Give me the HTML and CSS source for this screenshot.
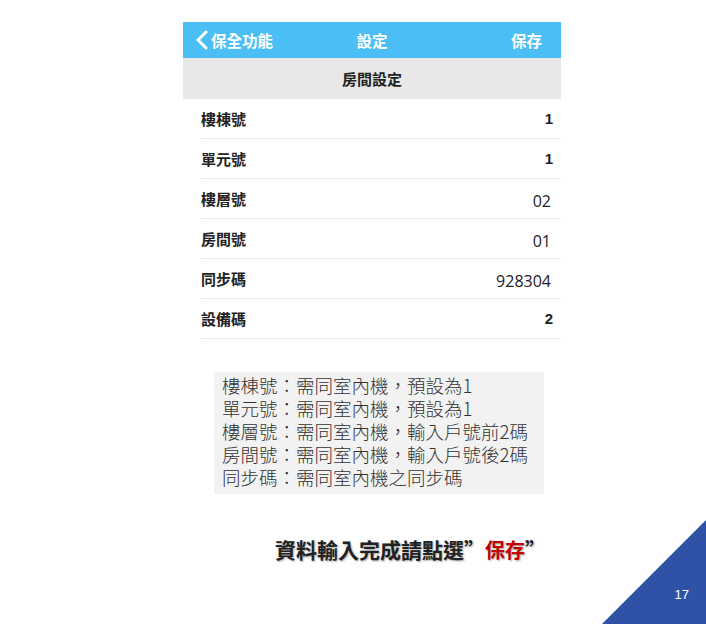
FILE: index.html
```html
<!DOCTYPE html>
<html lang="zh-Hant">
<head>
    <meta charset="UTF-8">
    <title>房間設定</title>
    <link rel="stylesheet" href="styles.css">
</head>
<body>
    <div class="slide">
        <div class="phone">
            <div class="topbar">
                <span class="back">
                    <svg width="14" height="20" viewBox="0 0 14 20"><path d="M11 2 L3 10 L11 18" fill="none" stroke="#fff" stroke-width="3" stroke-linecap="round" stroke-linejoin="round"/></svg>
                    保全功能
                </span>
                <span class="title">設定</span>
                <span class="save">保存</span>
            </div>
            <div class="section">房間設定</div>
            <div class="row"><span class="label">樓棟號</span><span class="value bold">1</span></div>
            <div class="row"><span class="label">單元號</span><span class="value bold">1</span></div>
            <div class="row"><span class="label">樓層號</span><span class="value num">02</span></div>
            <div class="row"><span class="label">房間號</span><span class="value num">01</span></div>
            <div class="row"><span class="label">同步碼</span><span class="value num">928304</span></div>
            <div class="row"><span class="label">設備碼</span><span class="value bold">2</span></div>
        </div>

        <div class="note">
            <div>樓棟號：需同室內機，預設為1</div>
            <div>單元號：需同室內機，預設為1</div>
            <div>樓層號：需同室內機，輸入戶號前2碼</div>
            <div>房間號：需同室內機，輸入戶號後2碼</div>
            <div>同步碼：需同室內機之同步碼</div>
        </div>

        <div class="hint">資料輸入完成請點選”<span class="red">保存</span>”</div>

        <div class="corner"><span class="page">17</span></div>
    </div>
</body>
</html>
```

FILE: styles.css
```css
body {
    margin: 0;
    background-color: #fff;
    font-family: "Noto Sans CJK TC", "Noto Sans", sans-serif;
}
.slide {
    position: relative;
    width: 706px;
    height: 624px;
    overflow: hidden;
}
.phone {
    width: 378px;
    margin-left: 183px;
    padding-top: 22px;
}
.topbar {
    height: 36px;
    background-color: #4bbef5;
    color: #fff;
    font-size: 15.5px;
    font-weight: bold;
    display: grid;
    grid-template-columns: 1fr auto 1fr;
    align-items: center;
}
.back {
    display: flex;
    align-items: center;
    gap: 2px;
    padding-left: 12px;
}
.save {
    text-align: right;
    padding-right: 19px;
}
.section {
    height: 41px;
    background-color: #e8e8e8;
    font-size: 15px;
    font-weight: bold;
    color: #222;
    display: flex;
    align-items: center;
    justify-content: center;
}
.row {
    height: 39px;
    margin-left: 18px;
    border-bottom: 1px solid #e6e6e6;
    display: flex;
    justify-content: space-between;
    align-items: center;
    padding-right: 8px;
}
.label {
    font-size: 15px;
    font-weight: bold;
    color: #222;
    margin-top: -1px;
}
.value {
    color: #222;
}
.value.bold {
    font-family: "Liberation Sans", sans-serif;
    font-weight: bold;
    font-size: 15px;
}
.value.num {
    font-family: "Open Sans", sans-serif;
    font-size: 16px;
    margin-top: 5px;
    padding-right: 2px;
}
.note {
    width: 316px;
    margin: 33px 0 0 214px;
    padding: 2px 6px 5px 8px;
    background-color: #f2f2f2;
    color: #333;
    font-size: 18.5px;
    line-height: 23px;
    font-weight: 300;
}
.note div {
    white-space: nowrap;
}
.hint {
    margin: 40px 0 0 275px;
    font-size: 21px;
    font-weight: bold;
    color: #222;
    text-shadow: 1px 1px 2px rgba(0, 0, 0, 0.35);
}
.red {
    color: #c00000;
    font-size: 20px;
}
.corner {
    position: absolute;
    right: 0;
    bottom: 0;
    width: 104px;
    height: 104px;
    background-color: #2e52a6;
    clip-path: polygon(100% 0, 100% 100%, 0 100%);
}
.page {
    position: absolute;
    right: 17px;
    bottom: 22px;
    color: #fff;
    font-family: "Liberation Sans", sans-serif;
    font-size: 13px;
}
```
